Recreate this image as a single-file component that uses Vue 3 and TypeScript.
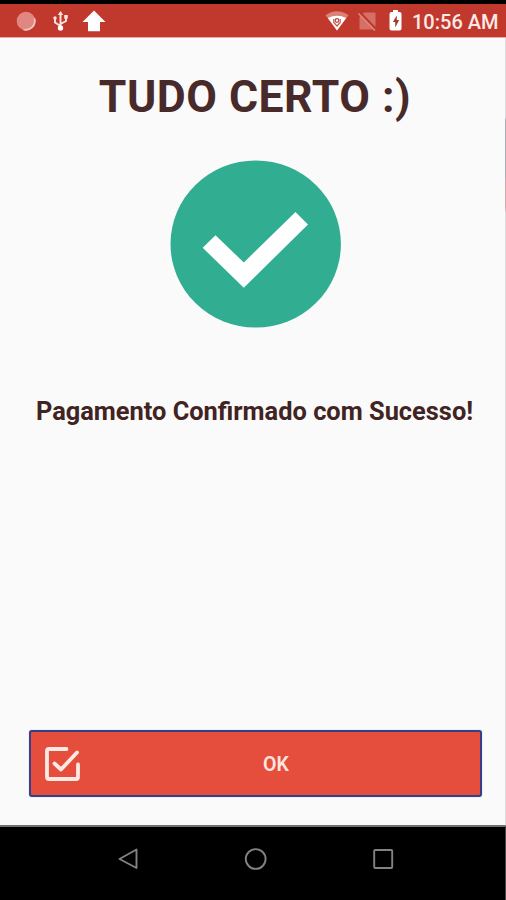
<script setup lang="ts">
import { ref } from 'vue'

const time = ref<string>('10:56 AM')
const title = ref<string>('TUDO CERTO :)')
const message = ref<string>('Pagamento Confirmado com Sucesso!')
</script>

<template>
  <div class="screen">
    <header class="status">
      <svg class="status-left" width="120" height="28" viewBox="0 0 120 28">
        <circle cx="26" cy="11" r="9.3" fill="#e08782" />
        <path d="M34.500 8.500a9 9 0 0 1-11 11" fill="none" stroke="#f4c5be" stroke-width="1.800" />
        <path d="M60.500 18V3M60.500 16l-5.500-3.500V8.500M60.500 14l5.500-3V7" fill="none" stroke="#fbe5e1" stroke-width="1.900" />
        <path d="M57.800 5L60.500 1l2.700 4z" fill="#fbe5e1" />
        <circle cx="60.500" cy="18" r="2.700" fill="#fff" />
        <circle cx="55" cy="8" r="1.700" fill="#fbe5e1" />
        <path d="M64.200 5h3.600v3.500h-3.600z" fill="#fbe5e1" />
        <path d="M94 0.500L105.500 12H100v9.300H88V12h-5.500z" fill="#fff" />
      </svg>
      <div class="status-right">
        <svg width="84" height="28" viewBox="0 0 84 28">
          <path d="M0.500 5.200Q12-2.500 23.500 5.200L12 20.500z" fill="#dd8177" />
          <path d="M2.800 8Q12 3.500 21.200 8L12 20.500z" fill="#fff" />
          <path d="M8.800 9v3.500l3.200 3.500 3.200-3.500V9" fill="none" stroke="#c4584e" stroke-width="1.200" />
          <circle cx="12" cy="10.500" r="1.800" fill="none" stroke="#b9443a" stroke-width="1.200" />
          <path d="M39 2.500h11.500v17H34.500V7z" fill="#d66f65" />
          <path d="M35 2.500L51 19" stroke="#bd362a" stroke-width="2.200" />
          <path d="M33.500 3.500L50 20.500" stroke="#dd8b82" stroke-width="1.400" />
          <path d="M68 0h5v2h1.500q2 0 2 2v14.500q0 2-2 2h-8q-2 0-2-2V4q0-2 2-2H68z" fill="#fff" />
          <path d="M71.800 5.500l-4 6.500h2.400v5.500l4-7.500h-2.400z" fill="#a33b32" />
        </svg>
        <span class="clock">{{ time }}</span>
      </div>
    </header>

    <main class="content">
      <h1 class="title">{{ title }}</h1>
      <svg class="badge" width="172" height="168" viewBox="0 0 172 168">
        <ellipse cx="85.700" cy="84" rx="85.200" ry="83.500" fill="#31ad91" />
        <path d="M32.700 87.800L45.500 75.200 73.800 102.500 125.500 52l12.500 12.500-64.200 63.200z" fill="#fff" />
      </svg>
      <p class="message">{{ message }}</p>
      <button class="ok" type="button">
        <svg class="ok-icon" width="38" height="38" viewBox="0 0 38 38">
          <g fill="none" stroke="#ffe9e3" stroke-width="3.800" stroke-linecap="round" stroke-linejoin="round">
            <path d="M23.500 4H6Q4 4 4 6v26q0 2 2 2h27q2 0 2-2V19.500" />
            <path d="M11.500 18.500l6.500 6L34 7.500" />
          </g>
        </svg>
        <span class="ok-label">OK</span>
      </button>
    </main>

    <nav class="navbar">
      <svg width="22" height="24" viewBox="0 0 22 24">
        <path d="M18.500 2.500v18.500L1.500 12z" fill="none" stroke="#828282" stroke-width="1.900" stroke-linejoin="round" />
      </svg>
      <svg width="24" height="24" viewBox="0 0 24 24">
        <circle cx="11.700" cy="12" r="9.900" fill="none" stroke="#828282" stroke-width="1.900" />
      </svg>
      <svg width="22" height="24" viewBox="0 0 22 24">
        <rect x="2.200" y="3" width="18" height="18" rx="1" fill="none" stroke="#828282" stroke-width="1.900" />
      </svg>
    </nav>
    <div class="edge"></div>
  </div>
</template>

<style>
body {
  margin: 0;
  background: #fafafa;
}
</style>

<style scoped>
.screen {
  position: relative;
  display: flex;
  flex-direction: column;
  box-sizing: border-box;
  width: 506px;
  height: 900px;
  overflow: hidden;
  background: #fafafa;
  font-family: Roboto, sans-serif;
}

.status {
  display: flex;
  justify-content: space-between;
  box-sizing: border-box;
  height: 38px;
  padding-top: 6px;
  border-top: 4px solid #000;
  border-bottom: 1px solid #eea9a2;
  background: #c1392c;
}

.status-right {
  display: flex;
  padding-right: 8px;
}

.clock {
  width: 86px;
  margin-left: 3px;
  padding-top: 1px;
  color: #fde9e6;
  font-size: 20px;
  font-weight: 500;
  line-height: 23px;
  white-space: nowrap;
}

.content {
  display: flex;
  flex: 1;
  flex-direction: column;
  align-items: center;
  padding-right: 28px;
  padding-left: 32px;
}

.title {
  margin: 33px 0 0;
  color: #472a29;
  font-size: 44.5px;
  font-weight: 700;
  letter-spacing: 0.5px;
  line-height: 52px;
  white-space: nowrap;
}

.badge {
  margin-top: 37px;
  margin-left: 2px;
}

.message {
  margin: 68px 1px 0 0;
  color: #412322;
  font-size: 25.4px;
  font-weight: 700;
  line-height: 30px;
  white-space: nowrap;
}

.ok {
  display: grid;
  grid-template-columns: 38px 1fr;
  align-items: center;
  box-sizing: border-box;
  width: 453px;
  height: 67px;
  margin: auto 0 28px 1px;
  padding: 0 9px 0 12px;
  border: 2px solid #34408a;
  border-radius: 3px;
  box-shadow: 0 0 1px #7793cd;
  background: #e54d3c;
  color: #ffe5df;
  font: 600 19.5px/24px Roboto, sans-serif;
}

.ok-label {
  padding-top: 3px;
  text-align: center;
}

.navbar {
  display: flex;
  justify-content: space-between;
  box-sizing: border-box;
  height: 75px;
  padding: 20px 112px 0 118px;
  border-top: 2px solid #707070;
  background: #000;
}

.edge {
  position: absolute;
  top: 38px;
  right: 0;
  width: 1px;
  height: 862px;
  background: linear-gradient(#dedede 0 79px, #a9abb5 82px 137px, #d8acae 144px 171px, #dedede 175px 787px, #454545 788px);
}
</style>
